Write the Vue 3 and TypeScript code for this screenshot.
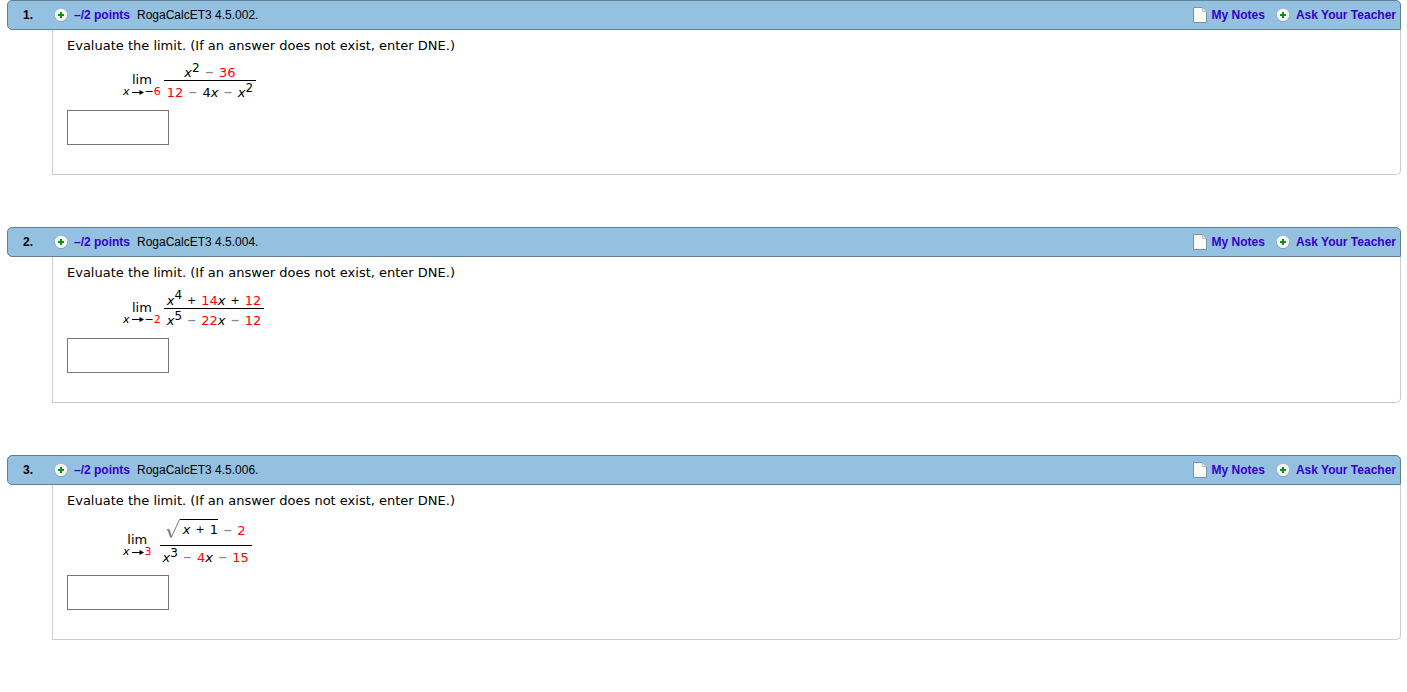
<script setup lang="ts">
type Kind = 'num' | 'var' | 'op minus' | 'op' | 'sup' | 'plain'
interface Token { kind: Kind; text: string }
interface Problem {
  id: number
  source: string
  negative: boolean
  target: string
  size: 'short' | 'medium' | 'tall'
  root: Token[]
  top: Token[]
  bottom: Token[]
}

const n = (text: string): Token => ({ kind: 'num', text })
const p = (text: string): Token => ({ kind: 'plain', text })
const s = (text: string): Token => ({ kind: 'sup', text })
const x: Token = { kind: 'var', text: 'x' }
const minus: Token = { kind: 'op minus', text: '−' }
const plus: Token = { kind: 'op', text: '+' }

const problems: Problem[] = [
  {
    id: 1, source: 'RogaCalcET3 4.5.002.', negative: true, target: '6', size: 'short', root: [],
    top: [x, s('2'), minus, n('36')],
    bottom: [n('12'), minus, p('4'), x, minus, x, s('2')],
  },
  {
    id: 2, source: 'RogaCalcET3 4.5.004.', negative: true, target: '2', size: 'medium', root: [],
    top: [x, s('4'), plus, n('14'), x, plus, n('12')],
    bottom: [x, s('5'), minus, n('22'), x, minus, n('12')],
  },
  {
    id: 3, source: 'RogaCalcET3 4.5.006.', negative: false, target: '3', size: 'tall', root: [x, plus, p('1')],
    top: [minus, n('2')],
    bottom: [x, s('3'), minus, n('4'), x, minus, n('15')],
  },
]
</script>

<template>
  <main class="page">
    <section v-for="q in problems" :key="q.id" class="problem">
      <header class="bar">
        <span class="number">{{ q.id }}.</span>
        <a href="#" class="link">
          <svg width="14" height="14" viewBox="0 0 14 14" aria-hidden="true">
            <circle cx="7" cy="7.5" r="6.4" fill="#7795a8" />
            <circle cx="7" cy="7" r="6.2" fill="#f8f8f6" />
            <path d="M7 4v6M4 7h6" stroke="#0a930a" stroke-width="2" />
          </svg>
          <span>–/2 points</span>
        </a>
        <span class="source">{{ q.source }}</span>
        <nav class="actions">
          <a href="#" class="link notes">
            <svg width="14" height="16" viewBox="0 0 14 16" aria-hidden="true">
              <path d="M.5.5h9l4 4v11H.5z" fill="#fafafa" stroke="#7893a5" />
              <path d="M9.5.5v4h4" fill="#e4e4e4" stroke="#b5bdc2" />
            </svg>
            <span>My Notes</span>
          </a>
          <a href="#" class="link">
            <svg width="14" height="14" viewBox="0 0 14 14" aria-hidden="true">
              <circle cx="7" cy="7.5" r="6.4" fill="#7795a8" />
              <circle cx="7" cy="7" r="6.2" fill="#f8f8f6" />
              <path d="M7 4v6M4 7h6" stroke="#0a930a" stroke-width="2" />
            </svg>
            <span>Ask Your Teacher</span>
          </a>
        </nav>
      </header>
      <div class="body">
        <label class="prompt" :for="'answer-' + q.id">Evaluate the limit. (If an answer does not exist, enter DNE.)</label>
        <div class="math" :class="{ wide: !q.negative }">
          <div class="limit">
            <span class="lim">lim</span>
            <span class="approach">
              <i>x</i>
              <svg class="arrow" width="12" height="7" viewBox="0 0 12 7" aria-hidden="true">
                <path d="M0 3.5h9" stroke="#000" />
                <path d="M7.5 1L12 3.5 7.5 6z" fill="#000" />
              </svg>
              <span v-if="q.negative">−</span>
              <span class="num">{{ q.target }}</span>
            </span>
          </div>
          <div class="fraction">
            <div class="top" :class="q.size">
              <span v-if="q.root.length" class="radical">
                <svg width="14" height="20" viewBox="0 0 14 20" aria-hidden="true">
                  <path d="M.5 11.5l2-1.5M5 19L13.5.5H14" fill="none" stroke="#777" />
                  <path d="M2.500 10.500L5 18" stroke="#777" stroke-width="2" />
                </svg>
                <span class="radicand"><span v-for="(t, i) in q.root" :key="i" :class="t.kind">{{ t.text }}</span></span>
              </span>
              <span v-for="(t, i) in q.top" :key="i" :class="t.kind">{{ t.text }}</span>
            </div>
            <div class="bottom">
              <span v-for="(t, i) in q.bottom" :key="i" :class="t.kind">{{ t.text }}</span>
            </div>
          </div>
        </div>
        <input :id="'answer-' + q.id" class="answer" type="text" autocomplete="off" />
      </div>
    </section>
  </main>
</template>

<style>
body {
  margin: 0;
  background: #fff;
}
</style>

<style scoped>
.page {
  padding: 0 6px 0 7px;
  color: #000;
  font-family: Verdana, "DejaVu Sans", sans-serif;
  font-size: 13px;
}
.problem {
  margin-bottom: 52px;
}
.bar {
  box-sizing: border-box;
  display: flex;
  align-items: center;
  height: 30px;
  padding: 0 4px 0 15px;
  border: 1px solid #5f8298;
  border-radius: 5px 5px 0 5px;
  background: #95c1e0;
  font: 12px/14px Arial, "Liberation Sans", sans-serif;
}
.number {
  width: 31px;
  font-weight: bold;
}
.link {
  display: flex;
  align-items: center;
  gap: 6px;
  color: #3300cc;
  font-weight: bold;
  text-decoration: none;
}
.source {
  margin-left: 7px;
}
.actions {
  display: flex;
  gap: 11px;
  margin-left: auto;
}
.notes {
  gap: 5px;
}
.body {
  display: flex;
  flex-direction: column;
  align-items: flex-start;
  margin-left: 45px;
  padding: 8px 14px 29px;
  border: 1px solid #ccc;
  border-top: 0;
  border-radius: 0 0 5px 0;
}
.prompt {
  line-height: 16px;
}
.math {
  display: flex;
  align-items: center;
  gap: 3px;
  margin: 8px 0 10px 56px;
}
.wide {
  gap: 8px;
}
.limit {
  display: flex;
  flex-direction: column;
  align-items: center;
  padding-top: 10px;
  line-height: 12px;
}
.approach {
  display: flex;
  align-items: center;
  font-size: 11px;
}
.arrow {
  margin: 0 1px 0 2px;
}
.num {
  color: #f00;
}
.var {
  font-style: italic;
}
.op {
  margin: 0 5px;
  font-size: 11px;
}
.minus {
  color: #888;
  font-weight: bold;
}
.sup {
  align-self: flex-start;
  font-size: 12px;
  line-height: 12px;
}
.top,
.bottom {
  display: flex;
  justify-content: center;
  align-items: flex-end;
  height: 18px;
  padding: 0 3px;
  line-height: 14px;
}
.bottom {
  height: 19px;
}
.bottom .sup {
  line-height: 15px;
}
.top {
  border-bottom: 1px solid #000;
}
.medium {
  height: 19px;
}
.tall {
  height: 28px;
  align-items: center;
}
.radical {
  display: flex;
  align-items: flex-start;
  height: 24px;
}
.radicand {
  display: flex;
  padding-left: 3px;
  border-top: 1px solid #000;
  line-height: 19px;
}
.answer {
  box-sizing: border-box;
  width: 102px;
  height: 35px;
  padding: 4px;
  border: 1px solid #777;
  border-radius: 0;
  background: #fff;
  font: inherit;
}
</style>
